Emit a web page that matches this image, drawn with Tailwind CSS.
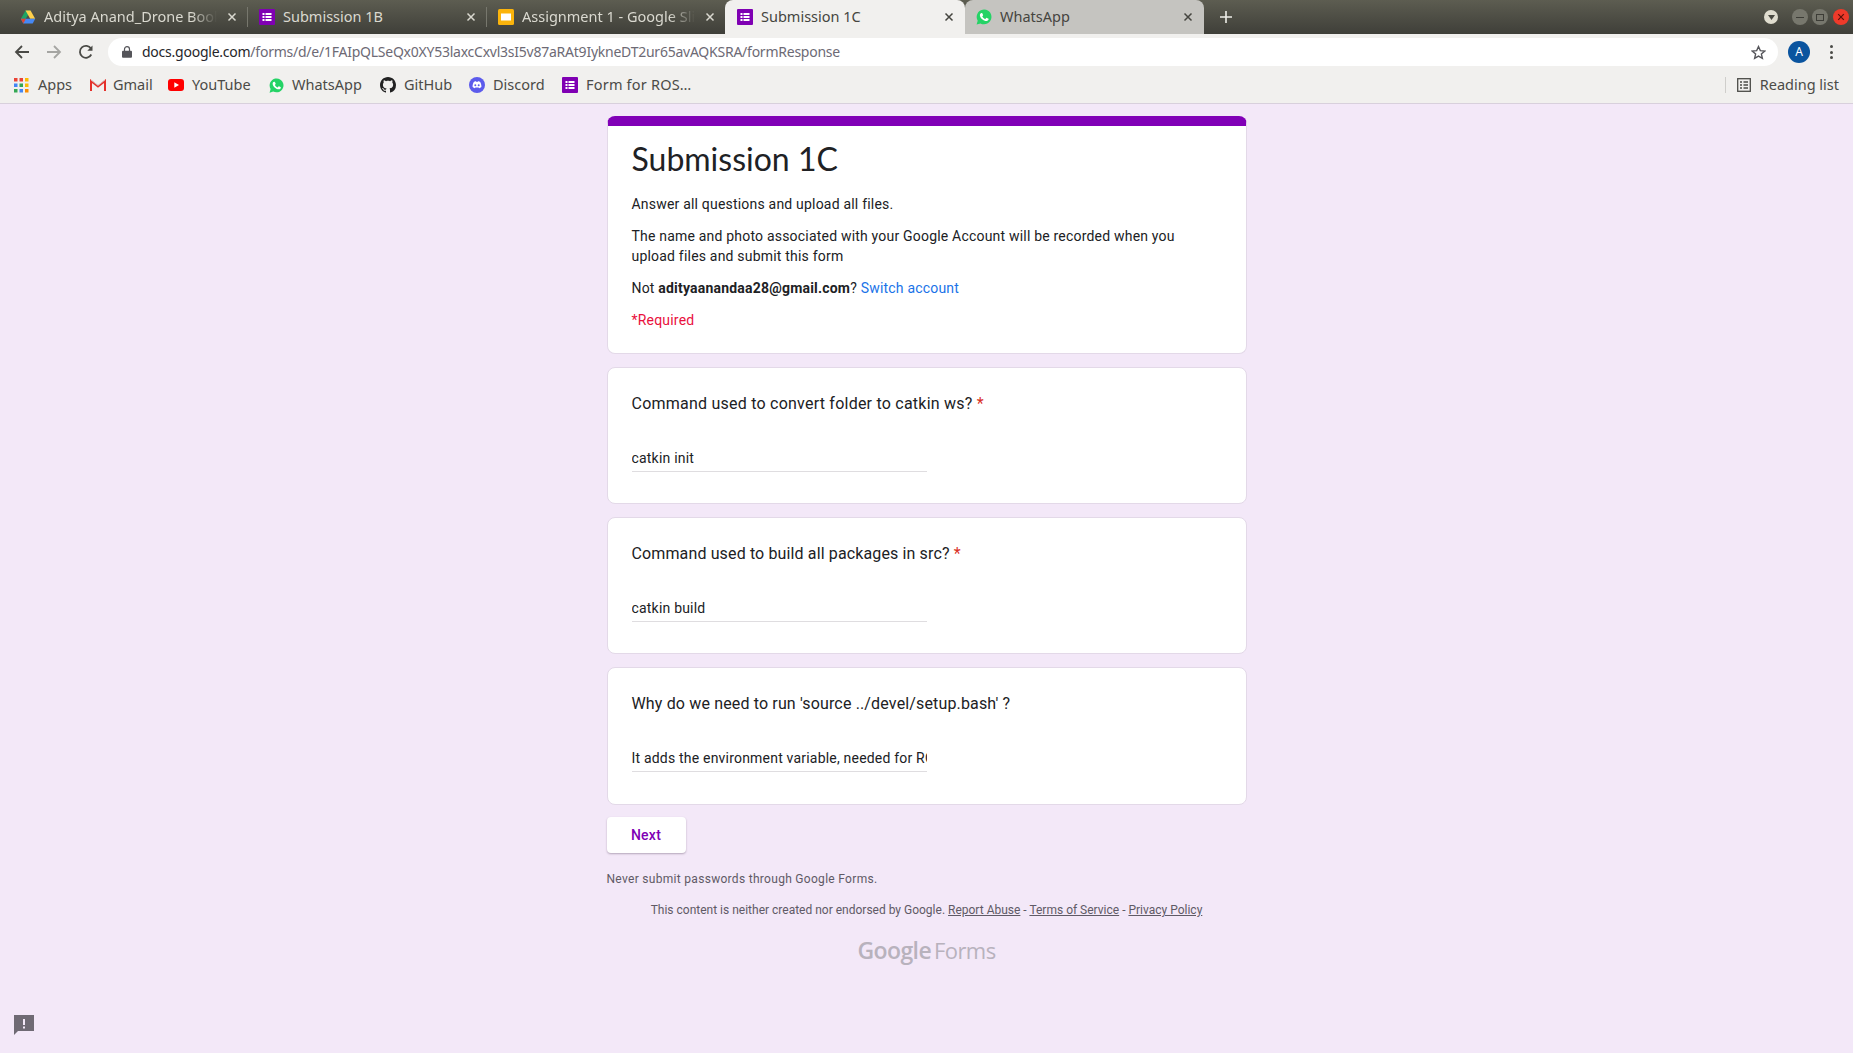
<!DOCTYPE html>
<html lang="en">
<head>
<meta charset="utf-8">
<title>Submission 1C</title>
<script src="https://cdn.jsdelivr.net/npm/@tailwindcss/browser@4"></script>
</head>
<body class="w-[1853px] h-[1053px] overflow-hidden bg-[#f3e8f8] font-['Roboto',sans-serif] text-[#202124] relative">
<svg class="hidden">
  <symbol id="forms" viewBox="0 0 16 16"><rect width="16" height="16" rx="1" fill="#7f00b3"/><g fill="#fff"><rect x="3.500" y="4" width="2" height="2"/><rect x="6.500" y="4" width="6" height="2"/><rect x="3.500" y="7" width="2" height="2"/><rect x="6.500" y="7" width="6" height="2"/><rect x="3.500" y="10" width="2" height="2"/><rect x="6.500" y="10" width="6" height="2"/></g></symbol>
  <symbol id="wa" viewBox="0 0 16 16"><path d="M.6 15.600l1.100-3.900A7.400 7.400 0 1 1 4.500 14.400z" fill="#25d366"/><path d="M5.600 3.900c.3 0 .6 0 .8.5l.7 1.500c.1.2 0 .5-.1.6l-.6.8c-.1.2-.1.3 0 .5.6 1 1.400 1.700 2.500 2.200.2.100.3.100.5-.1l.7-.9c.2-.2.4-.2.6-.1l1.500.7c.3.200.4.300.4.500 0 .9-.8 1.900-2 2-1.300.1-3-.5-4.600-2-1.400-1.400-2.200-2.800-2.100-4.200 0-1 .7-1.900 1.700-2z" fill="#fff"/></symbol>
  <symbol id="x" viewBox="0 0 10 10"><path d="M1.500 1.500l7 7M8.500 1.500l-7 7" stroke="currentColor" stroke-width="1.500" fill="none"/></symbol>
</svg>

<header class="h-[34px] flex bg-gradient-to-b from-[#5d5d51] to-[#3f3f39] text-[14.5px] font-['Noto_Sans',sans-serif]">
  <div class="w-[8px] shrink-0"></div>
  <div class="w-[239px] shrink-0 h-full flex items-center pl-[12px] relative text-[#dad9d0]">
    <svg class="w-[16px] h-[16px] shrink-0" viewBox="0 0 16 16"><path d="M5.500 1.500h5L5.800 9.800H.9z" fill="#1fa463"/><path d="M10.500 1.500L15.200 9.800h-5L5.500 1.500z" fill="#ffd04b"/><path d="M.9 9.800h14.300l-2.500 4.700H3.300z" fill="#4688f4"/><path d="M.9 9.800h5l-2.600 4.700z" fill="#e0452f"/></svg>
    <span class="ml-[8px] mb-[1px] w-[173px] overflow-hidden whitespace-nowrap mask-r-from-[85%] mask-r-to-100%">Aditya Anand_Drone Book</span>
    <svg class="absolute right-[10px] top-[12px] w-[10px] h-[10px]"><use href="#x"/></svg>
    <span class="absolute right-[-1px] top-[7px] w-px h-[20px] bg-[#77776d]"></span>
  </div>
  <div class="w-[239px] shrink-0 h-full flex items-center pl-[12px] relative text-[#dad9d0]">
    <svg class="w-[16px] h-[16px] shrink-0"><use href="#forms"/></svg>
    <span class="ml-[8px] mb-[1px] whitespace-nowrap">Submission 1B</span>
    <svg class="absolute right-[10px] top-[12px] w-[10px] h-[10px]"><use href="#x"/></svg>
    <span class="absolute right-[-1px] top-[7px] w-px h-[20px] bg-[#77776d]"></span>
  </div>
  <div class="w-[239px] shrink-0 h-full flex items-center pl-[12px] relative text-[#dad9d0]">
    <svg class="w-[16px] h-[16px] shrink-0" viewBox="0 0 16 16"><rect width="16" height="16" rx="1.500" fill="#fbb40c"/><rect x="3" y="4.500" width="10" height="7" fill="#fff"/></svg>
    <span class="ml-[8px] mb-[1px] w-[173px] overflow-hidden whitespace-nowrap mask-r-from-[85%] mask-r-to-100%">Assignment 1 - Google Slides</span>
    <svg class="absolute right-[10px] top-[12px] w-[10px] h-[10px]"><use href="#x"/></svg>
  </div>
  <div class="w-[240px] shrink-0 h-full flex items-center pl-[12px] relative bg-[#f1f0ee] rounded-t-[8px] text-[#45453f] z-10">
    <svg class="w-[16px] h-[16px] shrink-0"><use href="#forms"/></svg>
    <span class="ml-[8px] mb-[1px] whitespace-nowrap">Submission 1C</span>
    <svg class="absolute right-[11px] top-[12px] w-[10px] h-[10px]"><use href="#x"/></svg>
  </div>
  <div class="w-[239px] shrink-0 h-full flex items-center pl-[11px] relative bg-[#c5c4c0] rounded-t-[8px] text-[#45453f]">
    <svg class="w-[16px] h-[16px] shrink-0"><use href="#wa"/></svg>
    <span class="ml-[8px] mb-[1px] whitespace-nowrap">WhatsApp</span>
    <svg class="absolute right-[11px] top-[12px] w-[10px] h-[10px]"><use href="#x"/></svg>
  </div>
  <div class="w-[44px] shrink-0 h-full flex items-center justify-center">
    <svg class="w-[12px] h-[12px]" viewBox="0 0 12 12"><path d="M6 0v12M0 6h12" stroke="#eeeee8" stroke-width="1.600"/></svg>
  </div>
  <div class="flex-1"></div>
  <div class="flex items-center pr-[4px]">
    <span class="w-[14px] h-[14px] rounded-full bg-[#e0ddcf] flex items-center justify-center mr-[14px]"><svg class="w-[7px] h-[5px]" viewBox="0 0 7 5"><path d="M0 0h7L3.500 5z" fill="#4a4a42"/></svg></span>
    <span class="w-[16px] h-[16px] rounded-full bg-[#77776d] flex items-center justify-center mr-[4px]"><span class="w-[8px] h-px bg-[#3c3c36]"></span></span>
    <span class="w-[16px] h-[16px] rounded-full bg-[#77776d] flex items-center justify-center mr-[5px]"><span class="w-[8px] h-[7px] border border-[#3c3c36]"></span></span>
    <span class="w-[16px] h-[16px] rounded-full bg-[#ee3a2a] flex items-center justify-center text-[#5b1009]"><svg class="w-[8px] h-[8px]"><use href="#x"/></svg></span>
  </div>
</header>

<div class="h-[36px] bg-[#f1f0ee] flex items-center font-['Noto_Sans',sans-serif] text-[14px]">
  <div class="w-[108px] shrink-0 flex items-center pl-[14px] gap-[16px]">
    <svg class="w-[16px] h-[16px]" viewBox="0 0 16 16"><path d="M15 8H2M8 2L2 8l6 6" stroke="#4a4a46" stroke-width="1.800" fill="none"/></svg>
    <svg class="w-[16px] h-[16px]" viewBox="0 0 16 16"><path d="M1 8h13M8 2l6 6-6 6" stroke="#a5a5a2" stroke-width="1.800" fill="none"/></svg>
    <svg class="w-[16px] h-[16px]" viewBox="0 0 16 16"><path d="M13.300 10.500A6 6 0 1 1 13 4.600" stroke="#4a4a46" stroke-width="1.800" fill="none"/><path d="M14.500 1.500v5.200H9.300z" fill="#4a4a46"/></svg>
  </div>
  <div class="w-[1670px] shrink-0 h-[28px] bg-white rounded-full flex items-center pl-[14px] pr-[12px]">
    <svg class="w-[10px] h-[12px] shrink-0" viewBox="0 0 10 12"><path d="M2.500 5V3.200a2.500 2.500 0 0 1 5 0V5" stroke="#55555a" stroke-width="1.200" fill="none"/><rect y="4.800" width="10" height="7" rx="1" fill="#55555a"/></svg>
    <span class="ml-[10px] mb-[1px] whitespace-nowrap text-[#6d6a75] tracking-[-0.24px]"><span class="text-[#26262a]">docs.google.com</span>/forms/d/e/1FAIpQLSeQx0XY53laxcCxvl3sI5v87aRAt9IykneDT2ur65avAQKSRA/formResponse</span>
    <svg class="ml-auto w-[15px] h-[15px]" viewBox="0 0 24 24"><path d="M12 2.500l2.900 6.500 7.100.7-5.400 4.700 1.600 7-6.200-3.700-6.200 3.700 1.600-7L2 9.700l7.100-.7z" stroke="#55555a" stroke-width="2.200" fill="none"/></svg>
  </div>
  <span class="ml-[10px] w-[22px] h-[22px] rounded-full bg-[#0a549f] text-white text-[12px] flex items-center justify-center">A</span>
  <span class="ml-[20px] flex flex-col gap-[2.500px]"><i class="block w-[3px] h-[3px] rounded-full bg-[#4a4a46]"></i><i class="block w-[3px] h-[3px] rounded-full bg-[#4a4a46]"></i><i class="block w-[3px] h-[3px] rounded-full bg-[#4a4a46]"></i></span>
</div>

<nav class="h-[34px] bg-[#f1f0ee] border-b border-[#d8d0dc] flex items-center pl-[14px] pb-[3px] font-['Noto_Sans',sans-serif] text-[14.5px] text-[#4b4b47]">
  <a class="w-[76px] shrink-0 flex items-center gap-[9px]">
    <svg class="w-[15px] h-[15px] shrink-0" viewBox="0 0 15 15"><rect width="3.500" height="3.500" fill="#ea4335"/><rect x="5.500" width="3.500" height="3.500" fill="#ea4335"/><rect x="11" width="3.500" height="3.500" fill="#fbbc05"/><rect y="5.500" width="3.500" height="3.500" fill="#4285f4"/><rect x="5.500" y="5.500" width="3.500" height="3.500" fill="#34a853"/><rect x="11" y="5.500" width="3.500" height="3.500" fill="#fbbc05"/><rect y="11" width="3.500" height="3.500" fill="#34a853"/><rect x="5.500" y="11" width="3.500" height="3.500" fill="#4285f4"/><rect x="11" y="11" width="3.500" height="3.500" fill="#fb8c00"/></svg>
    <span>Apps</span></a>
  <a class="w-[78px] shrink-0 flex items-center gap-[7px]">
    <svg class="w-[16px] h-[13px] shrink-0" viewBox="0 0 16 13"><path d="M1 12V2l7 5.500L15 2v10" stroke="#e5302a" stroke-width="2" fill="none"/><path d="M1 1l7 5.500L15 1" stroke="#d0d0d0" stroke-width=".8" fill="none"/></svg>
    <span>Gmail</span></a>
  <a class="w-[101px] shrink-0 flex items-center gap-[8px]">
    <svg class="w-[16px] h-[12px] shrink-0" viewBox="0 0 16 12"><rect width="16" height="12" rx="3" fill="#f00"/><path d="M6.300 3.200L11 6l-4.700 2.800z" fill="#fff"/></svg>
    <span>YouTube</span></a>
  <a class="w-[111px] shrink-0 flex items-center gap-[8px]">
    <svg class="w-[15px] h-[15px] shrink-0"><use href="#wa"/></svg>
    <span>WhatsApp</span></a>
  <a class="w-[89px] shrink-0 flex items-center gap-[8px]">
    <svg class="w-[16px] h-[16px] shrink-0" viewBox="0 0 16 16"><path fill="#222" d="M8 0C3.580 0 0 3.580 0 8c0 3.540 2.290 6.530 5.470 7.590.4.070.55-.17.55-.38 0-.19-.01-.82-.01-1.490-2.010.37-2.530-.49-2.690-.94-.09-.23-.48-.94-.82-1.130-.28-.15-.68-.52-.01-.53.63-.01 1.080.58 1.230.82.72 1.210 1.870.87 2.330.66.07-.52.28-.87.51-1.070-1.780-.2-3.640-.89-3.640-3.950 0-.87.31-1.590.82-2.150-.08-.2-.36-1.020.08-2.120 0 0 .67-.21 2.200.82.64-.18 1.320-.27 2-.27.68 0 1.360.09 2 .27 1.530-1.040 2.200-.82 2.200-.82.44 1.100.16 1.920.08 2.120.51.56.82 1.270.82 2.150 0 3.070-1.870 3.750-3.650 3.950.29.25.54.73.54 1.480 0 1.070-.01 1.930-.01 2.200 0 .21.15.46.55.38A8.013 8.013 0 0016 8c0-4.420-3.580-8-8-8z"/></svg>
    <span>GitHub</span></a>
  <a class="w-[93px] shrink-0 flex items-center gap-[8px]">
    <svg class="w-[16px] h-[16px] shrink-0" viewBox="0 0 16 16"><circle cx="8" cy="8" r="8" fill="#5c5bec"/><path d="M4.800 4.900c1-.5 1.700-.6 2.100-.6l.2.400h1.800l.2-.4c.4 0 1.100.1 2.100.6.900 1.500 1.300 3.200 1.200 5.200-.8.6-1.500.9-2.300 1.100l-.5-.8H6.400l-.5.8c-.8-.2-1.500-.5-2.300-1.100-.1-2 .3-3.700 1.200-5.200z" fill="#fff"/><circle cx="6.300" cy="8.200" r="1" fill="#5c5bec"/><circle cx="9.700" cy="8.200" r="1" fill="#5c5bec"/></svg>
    <span>Discord</span></a>
  <a class="shrink-0 flex items-center gap-[8px]">
    <svg class="w-[16px] h-[16px] shrink-0"><use href="#forms"/></svg>
    <span class="tracking-[0.2px]">Form for ROS…</span></a>
  <div class="ml-auto flex items-center pr-[14px]">
    <span class="w-px h-[16px] bg-[#cfcecb] mr-[11px]"></span>
    <svg class="w-[14px] h-[14px] mr-[9px]" viewBox="0 0 14 14"><rect x=".7" y=".7" width="12.600" height="12.600" fill="none" stroke="#4b4b47" stroke-width="1.300"/><path d="M3 4h2M6.500 4H11M3 7h2M6.500 7H11M3 10h2M6.500 10H11" stroke="#4b4b47" stroke-width="1.300"/></svg>
    <span>Reading list</span>
  </div>
</nav>

<main class="w-[640px] mx-auto pt-[12px] flex flex-col text-[14px] leading-[20px] tracking-[0.2px]">
  <section class="h-[238px] bg-white rounded-[8px] border border-[#e3d9e8] border-t-[10px] border-t-[#8100b7] px-[24px]">
    <h1 class="font-['Lato',sans-serif] text-[32px] leading-[40px] mt-[13px] tracking-[0px]">Submission 1C</h1>
    <p class="mt-[15px]">Answer all questions and upload all files.</p>
    <p class="mt-[12px] max-w-[570px]">The name and photo associated with your Google Account will be recorded when you upload files and submit this form</p>
    <p class="mt-[12px]">Not <b class="font-bold">adityaanandaa28@gmail.com</b>? <a class="text-[#1a73e8]">Switch account</a></p>
    <p class="mt-[12px] text-[#e9103c]">*Required</p>
  </section>
  <section class="mt-[13px] h-[137px] bg-white rounded-[8px] border border-[#e3d9e8] px-[24px]">
    <h2 class="mt-[26px] text-[16px] leading-[20px] tracking-[0.23px]">Command used to convert folder to catkin ws? <span class="text-[#d93025]">*</span></h2>
    <div class="mt-[34px] w-[295px] h-[24px] border-b border-[#dfdde0] leading-[21px] whitespace-nowrap overflow-hidden">catkin init</div>
  </section>
  <section class="mt-[13px] h-[137px] bg-white rounded-[8px] border border-[#e3d9e8] px-[24px]">
    <h2 class="mt-[26px] text-[16px] leading-[20px] tracking-[0.13px]">Command used to build all packages in src? <span class="text-[#d93025]">*</span></h2>
    <div class="mt-[34px] w-[295px] h-[24px] border-b border-[#dfdde0] leading-[21px] whitespace-nowrap overflow-hidden">catkin build</div>
  </section>
  <section class="mt-[13px] h-[138px] bg-white rounded-[8px] border border-[#e3d9e8] px-[24px]">
    <h2 class="mt-[26px] text-[16px] leading-[20px] tracking-[0.15px]">Why do we need to run 'source ../devel/setup.bash' ?</h2>
    <div class="mt-[34px] w-[295px] h-[24px] border-b border-[#dfdde0] leading-[21px] whitespace-nowrap overflow-hidden">It adds the environment variable, needed for ROS</div>
  </section>
  <button class="mt-[12px] w-[79px] h-[36px] bg-white rounded-[4px] shadow-[0_1px_2px_rgba(60,40,70,0.35)] text-[#7f00b5] font-medium text-[14px] tracking-[0.25px]">Next</button>
  <p class="mt-[17px] text-[12px] leading-[18px] text-[#5f5a66] tracking-[0.3px]">Never submit passwords through Google Forms.</p>
  <p class="mt-[13px] text-[12px] leading-[18px] text-[#5f5a66] text-center tracking-normal">This content is neither created nor endorsed by Google. <u>Report Abuse</u> - <u>Terms of Service</u> - <u>Privacy Policy</u></p>
  <div class="mt-[15px] text-center leading-[32px] text-[#b8b2bd] font-['Open_Sans',sans-serif] tracking-[-0.6px]"><span class="font-semibold text-[23px]">Google</span> <span class="text-[22px]">Forms</span></div>
</main>

<button class="absolute left-[14px] top-[1015px] w-[20px] h-[20px]" aria-label="Report">
  <svg class="w-[20px] h-[20px]" viewBox="0 0 20 20"><path d="M0 0h20v16H4l-4 4z" fill="#6f6a74"/><rect x="9" y="4" width="2" height="6" fill="#f3e8f8"/><rect x="9" y="11.500" width="2" height="2" fill="#f3e8f8"/></svg>
</button>
</body>
</html>
